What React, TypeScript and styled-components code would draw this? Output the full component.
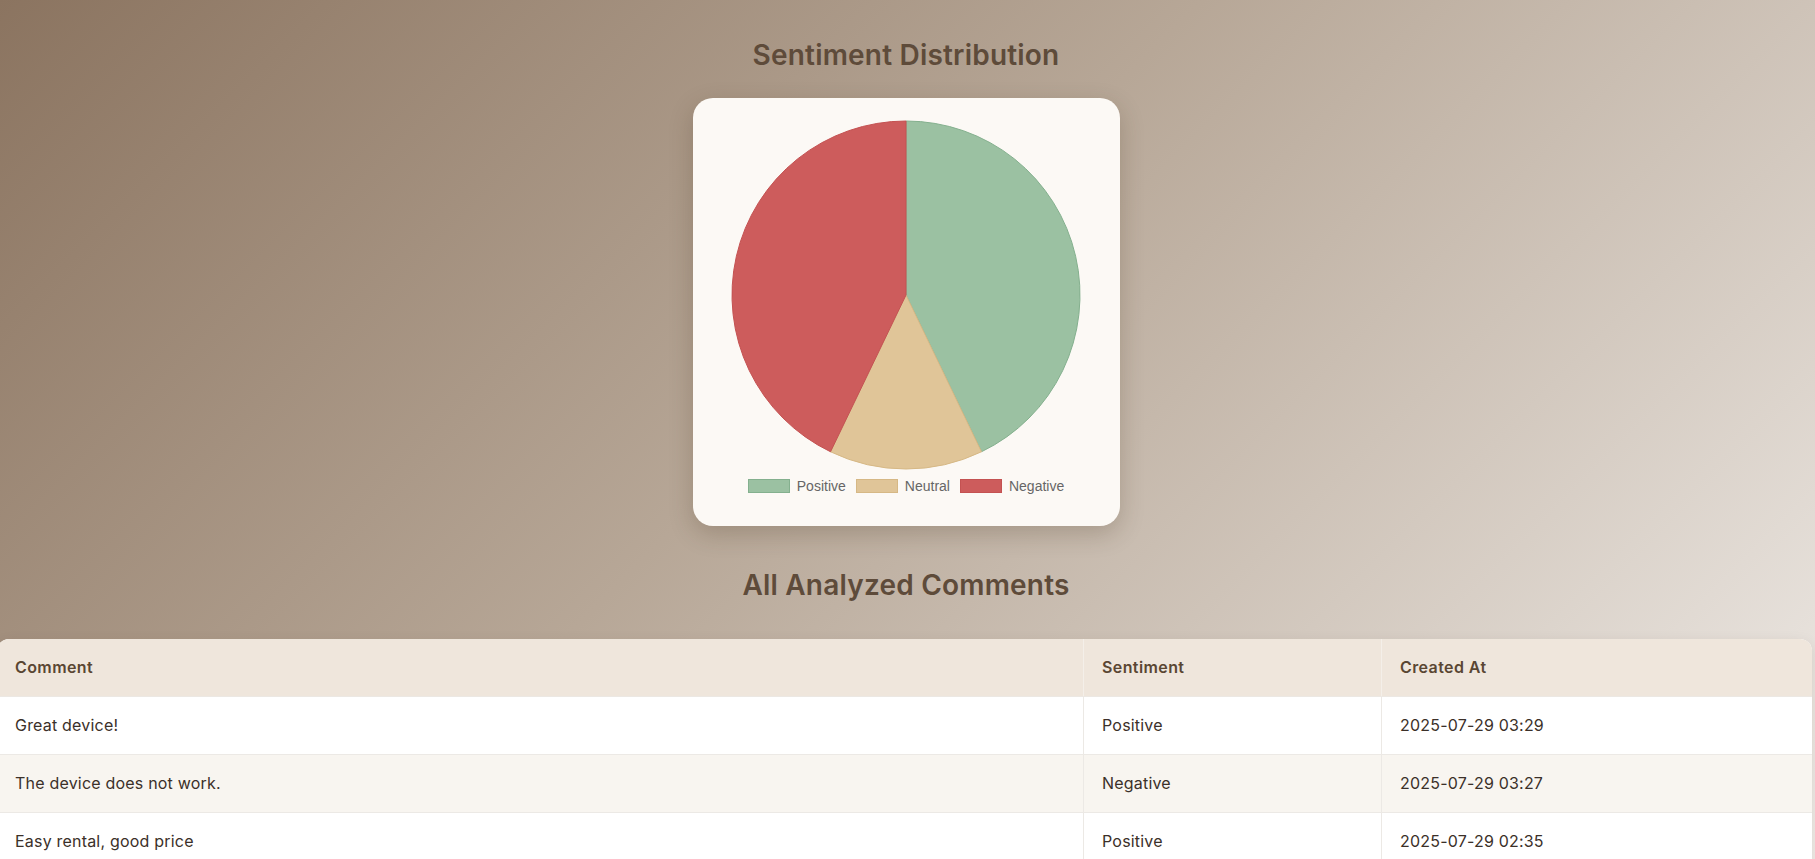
import styled, { createGlobalStyle } from 'styled-components';

const GlobalStyle = createGlobalStyle`
  html, body {
    margin: 0;
    padding: 0;
  }
  body {
    font-family: Inter, "Noto Sans", Arial, sans-serif;
    background: linear-gradient(135deg, #8b7460 0%, #b7a797 45%, #efebe7 100%);
    background-attachment: fixed;
    min-height: 100vh;
    color: #3b3029;
  }
`;

const Page = styled.div`
  width: 1812px;
  display: flex;
  flex-direction: column;
  align-items: center;
  padding-top: 38px;
`;

const SectionTitle = styled.h2`
  margin: 0;
  font-size: 28px;
  line-height: 34px;
  font-weight: 600;
  color: #5e4b3a;
  letter-spacing: 0.2px;
`;

const ChartCard = styled.div`
  margin-top: 26px;
  width: 427px;
  box-sizing: border-box;
  padding: 22px 20px 33px;
  background: #fcf9f5;
  border-radius: 20px;
  box-shadow: 0 8px 24px rgba(60, 40, 20, 0.22);
  display: flex;
  flex-direction: column;
  align-items: center;
`;

const Legend = styled.div`
  margin-top: 9px;
  display: flex;
  align-items: center;
  gap: 10px;
  font-family: "Liberation Sans", Arial, sans-serif;
  font-size: 14px;
  line-height: 14px;
  color: #666;
`;

const LegendItem = styled.div`
  display: flex;
  align-items: center;
  gap: 7px;
`;

const Swatch = styled.span<{ $fill: string; $stroke: string }>`
  width: 40px;
  height: 12px;
  background: ${p => p.$fill};
  border: 1px solid ${p => p.$stroke};
`;

const CommentsTitle = styled(SectionTitle)`
  margin-top: 42px;
`;

const TableWrap = styled.div`
  margin-top: 37px;
  margin-left: -3px;
  align-self: stretch;
  background: #fff;
  border-radius: 12px 12px 0 0;
  overflow: hidden;
  box-shadow: 0 4px 14px rgba(60, 40, 20, 0.1);
`;

const Table = styled.table`
  width: 100%;
  border-collapse: collapse;
  table-layout: fixed;
  font-size: 16px;
`;

const Th = styled.th<{ $w?: number }>`
  width: ${p => (p.$w ? `${p.$w - 36}px` : 'auto')};
  text-align: left;
  padding: 16px 18px;
  line-height: 25px;
  font-weight: 600;
  letter-spacing: 0.4px;
  color: #5a4633;
  background: #efe6dc;
  border-right: 1px solid #f4efe9;
  border-bottom: 1px solid #ece8e3;
  &:last-child { border-right: none; }
`;

const Tr = styled.tr`
  background: #fff;
  &:nth-child(even) { background: #f8f5f0; }
`;

const Td = styled.td`
  padding: 16px 18px;
  line-height: 25px;
  letter-spacing: 0.2px;
  color: #3b3029;
  border-right: 1px solid #ece9e5;
  border-bottom: 1px solid #ece9e5;
  &:last-child { border-right: none; }
`;

const slices = [
  { label: 'Positive', value: 3, fill: '#9bc1a2', stroke: '#84b08e' },
  { label: 'Neutral', value: 1, fill: '#e0c598', stroke: '#d6b885' },
  { label: 'Negative', value: 3, fill: '#cd5c5c', stroke: '#c45252' },
];

const rows = [
  { comment: 'Great device!', sentiment: 'Positive', created: '2025-07-29 03:29' },
  { comment: 'The device does not work.', sentiment: 'Negative', created: '2025-07-29 03:27' },
  { comment: 'Easy rental, good price', sentiment: 'Positive', created: '2025-07-29 02:35' },
];

function Pie() {
  const r = 174;
  const c = 175;
  const total = slices.reduce((s, d) => s + d.value, 0);
  let start = -Math.PI / 2;
  return (
    <svg width={350} height={350} viewBox="0 0 350 350">
      {slices.map(s => {
        const end = start + (s.value / total) * Math.PI * 2;
        const x1 = c + r * Math.cos(start);
        const y1 = c + r * Math.sin(start);
        const x2 = c + r * Math.cos(end);
        const y2 = c + r * Math.sin(end);
        const large = end - start > Math.PI ? 1 : 0;
        const d = `M${c},${c} L${x1},${y1} A${r},${r} 0 ${large} 1 ${x2},${y2} Z`;
        start = end;
        return <path key={s.label} d={d} fill={s.fill} stroke={s.stroke} strokeWidth={1} />;
      })}
    </svg>
  );
}

export default function App() {
  return (
    <>
      <GlobalStyle />
      <Page>
        <SectionTitle>Sentiment Distribution</SectionTitle>
        <ChartCard>
          <Pie />
          <Legend>
            {slices.map(s => (
              <LegendItem key={s.label}>
                <Swatch $fill={s.fill} $stroke={s.stroke} />
                {s.label}
              </LegendItem>
            ))}
          </Legend>
        </ChartCard>
        <CommentsTitle>All Analyzed Comments</CommentsTitle>
        <TableWrap>
          <Table>
            <thead>
              <tr>
                <Th $w={1086}>Comment</Th>
                <Th $w={297}>Sentiment</Th>
                <Th>Created At</Th>
              </tr>
            </thead>
            <tbody>
              {rows.map(r => (
                <Tr key={r.created}>
                  <Td>{r.comment}</Td>
                  <Td>{r.sentiment}</Td>
                  <Td>{r.created}</Td>
                </Tr>
              ))}
            </tbody>
          </Table>
        </TableWrap>
      </Page>
    </>
  );
}
